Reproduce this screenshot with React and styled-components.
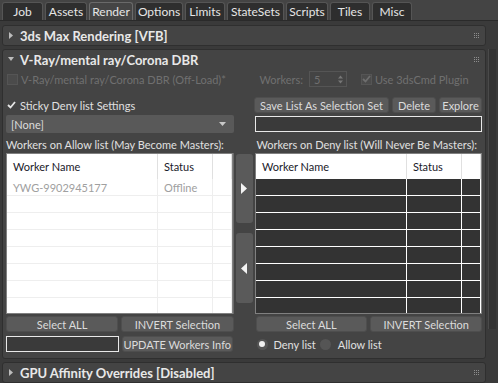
import React from 'react'
import styled, { createGlobalStyle } from 'styled-components'

const Global = createGlobalStyle`
  body {
    margin: 0;
    background: #444444;
    font-family: Lato, "Liberation Sans", Arial, sans-serif;
    font-size: 11px;
    color: #dcdcdc;
  }
`

const Page = styled.div`
  width: 498px;
  height: 383px;
  display: flex;
  flex-direction: column;
  overflow: hidden;
  background: #444444;
`

const TabBar = styled.div`
  height: 20px;
  display: flex;
  align-items: flex-end;
  gap: 2px;
  padding-left: 2px;
  border-bottom: 1px solid #2a2a2a;
`

const Tab = styled.div`
  height: 18px;
  width: ${({ $w }) => $w}px;
  display: flex;
  align-items: center;
  justify-content: center;
  box-sizing: border-box;
  background: ${({ $active }) => ($active ? '#454545' : '#2e2e2e')};
  border: 1px solid ${({ $active }) => ($active ? '#6a6a6a' : '#555555')};
  border-bottom: none;
  border-radius: 3px 3px 0 0;
  color: #e6e6e6;
  font-size: 12px;
`

const Body = styled.div`
  flex: 1;
  display: flex;
  background: #3a3a3a;
`

const RolloutColumn = styled.div`
  width: 484px;
  padding: 4px 0 0 2px;
  display: flex;
  flex-direction: column;
  gap: 3px;
`

const Rollout = styled.div`
  background: #444444;
  border: 1px solid #2f2f2f;
  border-radius: 3px;
  display: flex;
  flex-direction: column;
`

const RolloutHeader = styled.div`
  height: 19px;
  display: flex;
  align-items: center;
  padding-left: 5px;
  gap: 6px;
  font-weight: bold;
  color: #e8e8e8;
  font-size: 13px;
`

const GripBox = styled.span`
  margin-left: auto;
  margin-right: 6px;
  display: flex;
`

const Scrollbar = styled.div`
  width: 12px;
  display: flex;
  justify-content: center;
  padding-top: 28px;
`

const ScrollTrack = styled.div`
  width: 7px;
  height: 280px;
  background: #333333;
  border-left: 1px solid #4a4a4a;
`

const Content = styled.div`
  padding: 0 3px 6px 3px;
  display: flex;
  flex-direction: column;
`

const Row = styled.div`
  display: flex;
  align-items: center;
  height: ${({ $h }) => $h}px;
  margin-top: ${({ $mt }) => $mt || 0}px;
`

const Half = styled.div`
  width: ${({ $w }) => $w}px;
  display: flex;
  align-items: center;
  gap: ${({ $gap }) => $gap || 0}px;
  margin-left: ${({ $ml }) => $ml || 0}px;
  height: 100%;
`

const CheckLabel = styled.label`
  display: flex;
  align-items: center;
  gap: ${({ $gap }) => $gap || 3}px;
  margin-left: ${({ $ml }) => $ml || 0}px;
  color: ${({ $disabled }) => ($disabled ? '#707070' : '#e0e0e0')};
  white-space: nowrap;
`

const Box = styled.span`
  width: 11px;
  height: 11px;
  box-sizing: border-box;
  background: ${({ $plain }) => ($plain ? 'transparent' : '#4b4b4b')};
  border: 1px solid ${({ $plain }) => ($plain ? 'transparent' : '#555')};
  display: flex;
  align-items: center;
  justify-content: center;
`

const Label = styled.span`
  color: ${({ $disabled }) => ($disabled ? '#707070' : '#e0e0e0')};
  white-space: nowrap;
`

const Spinner = styled.div`
  width: 38px;
  height: 16px;
  box-sizing: border-box;
  border: 1px solid #555;
  background: #444;
  color: #707070;
  display: flex;
  align-items: center;
  justify-content: space-between;
  padding: 0 3px 0 4px;
`

const Button = styled.div`
  height: 16px;
  width: ${({ $w }) => ($w ? `${$w}px` : 'auto')};
  flex: ${({ $w }) => ($w ? 'none' : 1)};
  box-sizing: border-box;
  background: #5a5a5a;
  border: 1px solid #4e4e4e;
  border-radius: 3px;
  display: flex;
  align-items: center;
  justify-content: center;
  color: #dcdcdc;
  white-space: nowrap;
`

const Select = styled.div`
  width: 228px;
  height: 18px;
  box-sizing: border-box;
  background: #595959;
  border-radius: 2px;
  display: flex;
  align-items: center;
  justify-content: space-between;
  padding: 0 8px 0 5px;
  color: #dcdcdc;
`

const TextBox = styled.div`
  width: ${({ $w }) => $w}px;
  height: ${({ $h }) => $h || 16}px;
  box-sizing: border-box;
  background: #3a3a3a;
  border: 1px solid #e8e8e8;
`

const Lists = styled.div`
  display: flex;
  height: 161px;
`

const ListBox = styled.div`
  width: 229px;
  height: 161px;
  box-sizing: border-box;
  border: 1px solid #808080;
  background: ${({ $dark }) => ($dark ? '#333333' : '#ffffff')};
  overflow: hidden;
`

const ListHeader = styled.div`
  height: 25px;
  background: #ffffff;
  display: grid;
  grid-template-columns: 151px 55px 1fr;
  color: #1a1a2a;
`

const HeadCell = styled.div`
  display: flex;
  align-items: center;
  padding-left: 6px;
  border-right: 1px solid #e0e0e0;
`

const ListRow = styled.div`
  height: 16px;
  display: grid;
  grid-template-columns: 151px 55px 1fr;
  border-bottom: 1px solid ${({ $dark }) => ($dark ? '#ffffff' : '#eeeeee')};
  color: #a0a0a0;
`

const Cell = styled.div`
  display: flex;
  align-items: center;
  padding-left: 6px;
  border-right: 1px solid ${({ $dark }) => ($dark ? '#ffffff' : '#eeeeee')};
`

const Arrows = styled.div`
  width: 22px;
  display: flex;
  flex-direction: column;
  align-items: center;
  padding-top: 1px;
  background: linear-gradient(to right, #6a6a6a 0, #6a6a6a 1px, transparent 1px);
`

const ArrowButton = styled.div`
  width: 17px;
  height: ${({ $h }) => $h}px;
  margin-top: ${({ $mt }) => $mt || 0}px;
  background: #5a5a5a;
  border-radius: 3px;
  display: flex;
  align-items: center;
  justify-content: center;
`

const Radio = styled.span`
  width: 11px;
  height: 11px;
  border-radius: 50%;
  background: #555;
  display: flex;
  align-items: center;
  justify-content: center;
  &::after {
    content: '';
    width: 6px;
    height: 6px;
    border-radius: 50%;
    background: ${({ $on }) => ($on ? '#f0f0f0' : 'transparent')};
  }
`

const Tick = ({ color }) => (
  <svg width="9" height="8" viewBox="0 0 9 8">
    <path d="M1 4 L3.5 6.5 L8 1" fill="none" stroke={color} strokeWidth="1.8" />
  </svg>
)

const Caret = ({ open }) => (
  <svg width="6" height="7" viewBox="0 0 6 7">
    {open ? <path d="M0 1 H6 L3 5 Z" fill="#bcbcbc" /> : <path d="M1 0 V7 L5 3.5 Z" fill="#bcbcbc" />}
  </svg>
)

const Grip = () => (
  <GripBox>
    <svg width="5" height="5" viewBox="0 0 5 5">
      {[0, 2, 4].map(y =>
        [0, 2, 4].map(x => <rect key={`${x}-${y}`} x={x} y={y} width="1" height="1" fill="#8e8e8e" />)
      )}
    </svg>
  </GripBox>
)

const tabs = [
  ['Job', 41],
  ['Assets', 42],
  ['Render', 44],
  ['Options', 48],
  ['Limits', 40],
  ['StateSets', 57],
  ['Scripts', 42],
  ['Tiles', 40],
  ['Misc', 40]
]

function WorkerList({ dark, rows }) {
  const empty = Array.from({ length: 8 - rows.length })
  return (
    <ListBox $dark={dark}>
      <ListHeader>
        <HeadCell>Worker Name</HeadCell>
        <HeadCell>Status</HeadCell>
        <HeadCell />
      </ListHeader>
      {rows.map((r, i) => (
        <ListRow key={i} $dark={dark}>
          <Cell $dark={dark}>{r[0]}</Cell>
          <Cell $dark={dark}>{r[1]}</Cell>
          <Cell $dark={dark} />
        </ListRow>
      ))}
      {empty.map((_, i) => (
        <ListRow key={'e' + i} $dark={dark}>
          <Cell $dark={dark} />
          <Cell $dark={dark} />
          <Cell $dark={dark} />
        </ListRow>
      ))}
    </ListBox>
  )
}

export default function App() {
  return (
    <Page>
      <Global />
      <TabBar>
        {tabs.map(([t, w]) => (
          <Tab key={t} $w={w} $active={t === 'Render'}>
            {t}
          </Tab>
        ))}
      </TabBar>
      <Body>
        <RolloutColumn>
          <Rollout>
            <RolloutHeader>
              <Caret />
              3ds Max Rendering [VFB]
              <Grip />
            </RolloutHeader>
          </Rollout>
          <Rollout>
            <RolloutHeader>
              <Caret open />
              V-Ray/mental ray/Corona DBR
              <Grip />
            </RolloutHeader>
            <Content>
              <Row $h={20}>
                <Half $w={250} $ml={1}>
                  <CheckLabel $disabled>
                    <Box />
                    V-Ray/mental ray/Corona DBR (Off-Load)*
                  </CheckLabel>
                </Half>
                <Half $w={224} $gap={6} $ml={4}>
                  <Label $disabled>Workers:</Label>
                  <Spinner>
                    5
                    <svg width="5" height="9" viewBox="0 0 5 9">
                      <path d="M0 3.5 L2.5 0.5 L5 3.5 Z M0 5.5 L2.5 8.5 L5 5.5 Z" fill="#777" />
                    </svg>
                  </Spinner>
                  <CheckLabel $disabled $ml={8}>
                    <Box>
                      <Tick color="#6e6e6e" />
                    </Box>
                    Use 3dsCmd Plugin
                  </CheckLabel>
                </Half>
              </Row>
              <Row $h={16} $mt={8}>
                <Half $w={250}>
                  <CheckLabel>
                    <Box $plain>
                      <Tick color="#e6e6e6" />
                    </Box>
                    Sticky Deny list Settings
                  </CheckLabel>
                </Half>
                <Half $w={228} $gap={3}>
                  <Button $w={135}>Save List As Selection Set</Button>
                  <Button $w={44}>Delete</Button>
                  <Button $w={43}>Explore</Button>
                </Half>
              </Row>
              <Row $h={18} $mt={2}>
                <Half $w={250}>
                  <Select>
                    [None]
                    <svg width="7" height="4" viewBox="0 0 7 4">
                      <path d="M0 0 H7 L3.5 4 Z" fill="#c8c8c8" />
                    </svg>
                  </Select>
                </Half>
                <Half $w={228}>
                  <TextBox $w={227} />
                </Half>
              </Row>
              <Row $h={18} $mt={2}>
                <Half $w={251}>
                  <Label>Workers on Allow list (May Become Masters):</Label>
                </Half>
                <Half $w={228} $ml={2}>
                  <Label>Workers on Deny list (Will Never Be Masters):</Label>
                </Half>
              </Row>
              <Lists>
                <WorkerList rows={[['YWG-9902945177', 'Offline']]} />
                <Arrows>
                  <ArrowButton $h={69}>
                    <svg width="6" height="11" viewBox="0 0 6 11">
                      <path d="M0 0 L6 5.5 L0 11 Z" fill="#f4f4f4" />
                    </svg>
                  </ArrowButton>
                  <ArrowButton $h={70} $mt={10}>
                    <svg width="6" height="11" viewBox="0 0 6 11">
                      <path d="M6 0 L0 5.5 L6 11 Z" fill="#f4f4f4" />
                    </svg>
                  </ArrowButton>
                </Arrows>
                <WorkerList dark rows={[]} />
              </Lists>
              <Row $h={16} $mt={2}>
                <Half $w={229} $gap={3}>
                  <Button>Select ALL</Button>
                  <Button>INVERT Selection</Button>
                </Half>
                <Half $w={228} $gap={3} $ml={22}>
                  <Button>Select ALL</Button>
                  <Button>INVERT Selection</Button>
                </Half>
              </Row>
              <Row $h={16} $mt={4}>
                <Half $w={229} $gap={3}>
                  <TextBox $w={113} />
                  <Button>UPDATE Workers Info</Button>
                </Half>
                <Half $w={228} $ml={24}>
                  <CheckLabel $gap={6}>
                    <Radio $on />
                    Deny list
                  </CheckLabel>
                  <CheckLabel $gap={7} $ml={4}>
                    <Radio />
                    Allow list
                  </CheckLabel>
                </Half>
              </Row>
            </Content>
          </Rollout>
          <Rollout>
            <RolloutHeader>
              <Caret />
              GPU Affinity Overrides [Disabled]
              <Grip />
            </RolloutHeader>
          </Rollout>
        </RolloutColumn>
        <Scrollbar>
          <ScrollTrack />
        </Scrollbar>
      </Body>
    </Page>
  )
}
